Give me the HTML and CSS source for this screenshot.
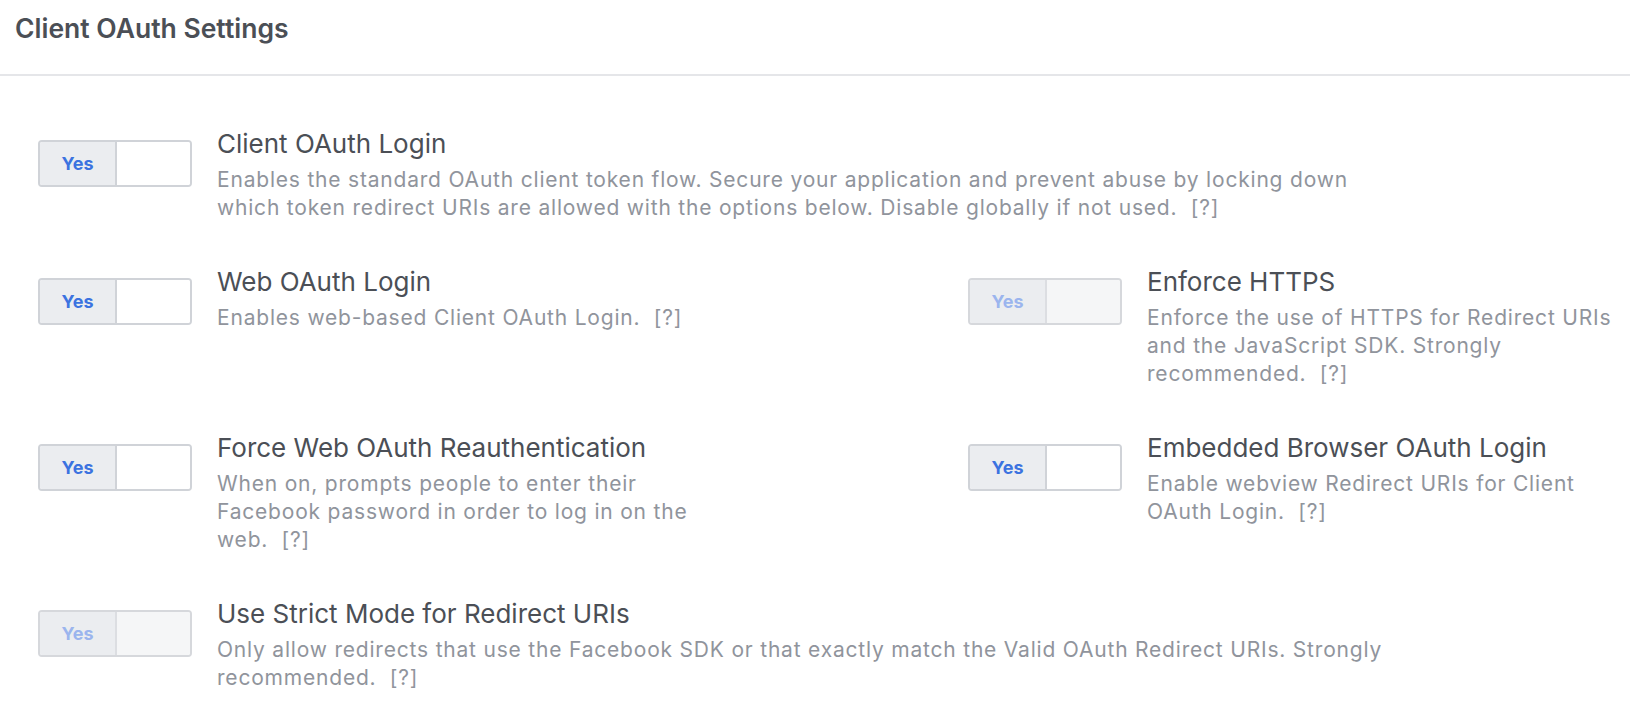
FILE: index.html
```html
<!DOCTYPE html>
<html>
<head>
<meta charset="utf-8">
<link rel="stylesheet" href="styles.css">
</head>
<body>
<div class="header"><h1 class="header-title">Client OAuth Settings</h1></div>
<div class="content">
  <div class="item wide">
    <div class="toggle"><span class="yes">Yes</span><span class="knob"></span></div>
    <div class="text">
      <div class="title">Client OAuth Login</div>
      <div class="desc desc-wide">Enables the standard OAuth client token flow. Secure your application and prevent abuse by locking down which token redirect URIs are allowed with the options below. Disable globally if not used.&nbsp; [?]</div>
    </div>
  </div>
  <div class="item">
    <div class="toggle"><span class="yes">Yes</span><span class="knob"></span></div>
    <div class="text">
      <div class="title">Web OAuth Login</div>
      <div class="desc">Enables web-based Client OAuth Login.&nbsp; [?]</div>
    </div>
  </div>
  <div class="item">
    <div class="toggle disabled"><span class="yes">Yes</span><span class="knob"></span></div>
    <div class="text">
      <div class="title">Enforce HTTPS</div>
      <div class="desc">Enforce the use of HTTPS for Redirect URIs and the JavaScript SDK. Strongly recommended.&nbsp; [?]</div>
    </div>
  </div>
  <div class="item">
    <div class="toggle"><span class="yes">Yes</span><span class="knob"></span></div>
    <div class="text">
      <div class="title">Force Web OAuth Reauthentication</div>
      <div class="desc">When on, prompts people to enter their Facebook password in order to log in on the web.&nbsp; [?]</div>
    </div>
  </div>
  <div class="item">
    <div class="toggle"><span class="yes">Yes</span><span class="knob"></span></div>
    <div class="text">
      <div class="title">Embedded Browser OAuth Login</div>
      <div class="desc">Enable webview Redirect URIs for Client OAuth Login.&nbsp; [?]</div>
    </div>
  </div>
  <div class="item wide">
    <div class="toggle disabled"><span class="yes">Yes</span><span class="knob"></span></div>
    <div class="text">
      <div class="title">Use Strict Mode for Redirect URIs</div>
      <div class="desc desc-wide">Only allow redirects that use the Facebook SDK or that exactly match the Valid OAuth Redirect URIs. Strongly recommended.&nbsp; [?]</div>
    </div>
  </div>
</div>
</body>
</html>
```
FILE: styles.css
```css
html, body {
  margin: 0;
  padding: 0;
  background: #ffffff;
  font-family: Inter, "Noto Sans", "Liberation Sans", sans-serif;
}
.header {
  height: 74px;
  border-bottom: 2px solid #e5e6e9;
  padding: 0 15px;
}
.header-title {
  margin: 0;
  padding-top: 12px;
  font-size: 26.5px;
  line-height: 32px;
  font-weight: 600;
  color: #4b4f56;
}
.content {
  display: grid;
  grid-template-columns: 930px 1fr;
  row-gap: 44px;
  padding: 52px 0 0 38px;
}
.item {
  display: flex;
  align-items: flex-start;
  gap: 25px;
}
.item.wide {
  grid-column: 1 / -1;
}
.toggle {
  flex: none;
  margin-top: 12px;
  width: 154px;
  height: 47px;
  box-sizing: border-box;
  border: 2px solid #d0d3d8;
  border-radius: 4px;
  display: flex;
  overflow: hidden;
  background: #ffffff;
}
.yes {
  width: 75px;
  background: #ebedf0;
  border-right: 2px solid #d0d3d8;
  color: #3b73e0;
  font-weight: 700;
  font-size: 18px;
  display: flex;
  align-items: center;
  justify-content: center;
}
.knob {
  flex: 1;
  background: #ffffff;
}
.toggle.disabled .yes {
  color: #9bb5ee;
  border-right-color: #dcdee2;
}
.toggle.disabled .knob {
  background: #f5f6f7;
}
.toggle.disabled {
  border-color: #d6d8dc;
}
.title {
  font-size: 26px;
  line-height: 32px;
  color: #4b4f56;
  margin-bottom: 6px;
}
.desc {
  font-size: 21px;
  line-height: 28px;
  letter-spacing: 0.8px;
  color: #90949c;
  max-width: 488px;
}
.desc.desc-wide {
  max-width: 1190px;
}
```
